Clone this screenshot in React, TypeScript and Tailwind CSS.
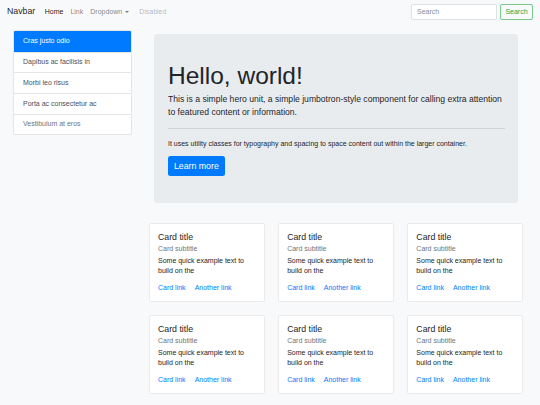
import React from "react";

const sideItems = [
  { label: "Cras justo odio", state: "active" },
  { label: "Dapibus ac facilisis in", state: "" },
  { label: "Morbi leo risus", state: "" },
  { label: "Porta ac consectetur ac", state: "" },
  { label: "Vestibulum at eros", state: "disabled" },
];

function Card() {
  return (
    <div className="bg-white border border-black/[.08] rounded-[2px] px-[8px] pt-[8px] pb-[8px]">
      <h5 className="text-[8.75px] leading-[10.5px] text-[#212529]">Card title</h5>
      <h6 className="mt-[1px] text-[7px] leading-[10.5px] text-[#6c757d]">Card subtitle</h6>
      <p className="mt-[1.5px] text-[7px] leading-[10.5px] text-[#212529] pr-[10px]">
        Some quick example text to build on the
      </p>
      <div className="mt-[6px] flex gap-[9px] text-[7px] leading-[10.5px] text-[#007bff]">
        <a>Card link</a>
        <a>Another link</a>
      </div>
    </div>
  );
}

export default function App() {
  return (
    <div
      className="w-[540px] min-h-[405px] bg-[#f8f9fa] text-[#212529]"
      style={{ fontFamily: '"Liberation Sans", Arial, sans-serif' }}
    >
      {/* Navbar */}
      <nav className="h-[24px] flex items-center px-[7px]">
        <span className="text-[8.75px] text-black/90 mr-[6px]">Navbar</span>
        <div className="flex items-center text-[7px]">
          <a className="px-[3.5px] text-black/90">Home</a>
          <a className="px-[3.5px] text-black/50">Link</a>
          <a className="px-[3.5px] text-black/50 flex items-center">
            Dropdown
            <span className="ml-[3px] w-0 h-0 border-l-[2.5px] border-r-[2.5px] border-t-[2.5px] border-l-transparent border-r-transparent border-t-black/50" />
          </a>
          <a className="px-[3.5px] ml-[3px] text-black/30">Disabled</a>
        </div>
        <div className="ml-auto flex items-center gap-[3px]">
          <div className="w-[86px] h-[16px] bg-white border border-[#dee2e6] rounded-[2px] px-[5px] flex items-center text-[7px] text-[#868e96]">
            Search
          </div>
          <button className="w-[33px] h-[16px] border border-[#28a745]/60 rounded-[2px] text-[7px] text-[#28a745] flex items-center justify-center">
            Search
          </button>
        </div>
      </nav>

      <div className="flex">
        {/* Sidebar list group */}
        <div className="ml-[13px] mt-[6px] w-[119px] self-start bg-white border border-black/[.1] rounded-[2px] overflow-hidden">
          {sideItems.map((it, i) => (
            <div
              key={it.label}
              className={
                "h-[20.7px] flex items-center pl-[9px] text-[7px] " +
                (i > 0 ? "border-t border-black/[.1] " : "") +
                (it.state === "active"
                  ? "bg-[#007bff] text-white"
                  : it.state === "disabled"
                  ? "text-[#6c757d]"
                  : "text-[#495057]")
              }
            >
              {it.label}
            </div>
          ))}
        </div>

        {/* Main column */}
        <div className="ml-[17px] mt-[10px] w-[374px]">
          <div className="mx-[5px] bg-[#e9ecef] rounded-[3px] pl-[14px] pr-[13px] pt-[27px] pb-[27px]">
            <h1 className="text-[24.5px] leading-[29.4px] text-[#212529] mb-[3px]">Hello, world!</h1>
            <p className="text-[8.6px] leading-[12.5px] text-[#212529]">
              This is a simple hero unit, a simple jumbotron-style component for calling extra attention to featured content or information.
            </p>
            <hr className="mt-[10px] mb-[9.5px] border-t border-black/10" />
            <p className="text-[7px] leading-[10.5px]">
              It uses utility classes for typography and spacing to space content out within the larger container.
            </p>
            <button className="mt-[7px] h-[20px] px-[6px] bg-[#007bff] text-white text-[8.75px] rounded-[2.5px] flex items-center">
              Learn more
            </button>
          </div>

          <div className="mt-[20px] grid grid-cols-3 gap-x-[13.5px] gap-y-[13px] pb-[10px]">
            {Array.from({ length: 6 }).map((_, i) => (
              <Card key={i} />
            ))}
          </div>
        </div>
      </div>
    </div>
  );
}
